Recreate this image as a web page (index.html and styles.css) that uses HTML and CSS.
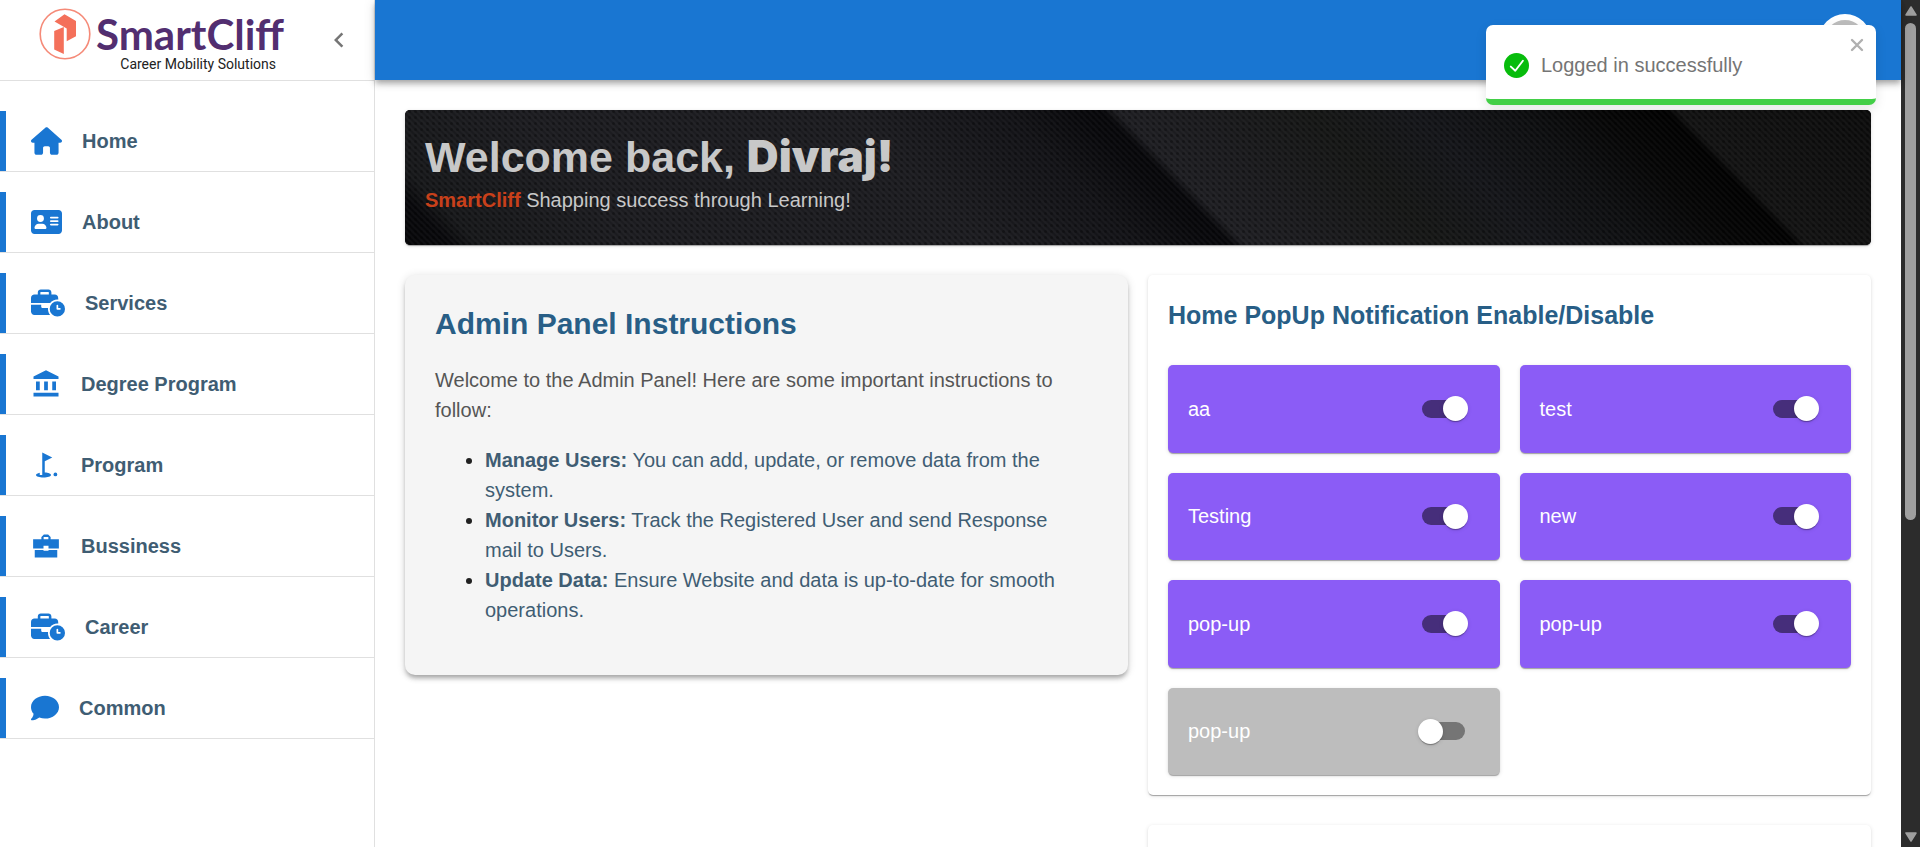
FILE: index.html
```html
<!DOCTYPE html>
<html lang="en">
<head>
<meta charset="utf-8">
<meta name="viewport" content="width=device-width, initial-scale=1">
<title>SmartCliff Admin</title>
<link rel="stylesheet" href="styles.css">
</head>
<body>
<div class="shell">
  <aside class="sidebar">
    <div class="sidebar-head">
      <a class="logo" href="#" aria-label="SmartCliff home">
        <svg class="logo-mark" viewBox="0 0 52 52" aria-hidden="true">
          <circle cx="26" cy="26" r="24.8" fill="#fff" stroke="#f58a78" stroke-width="1.6"/>
          <path d="M15.5 13.5 25.5 6.3 37 13v15.2L27.7 33.200V20.500z" fill="#f4705a"/>
          <path d="M15.200 23 24.800 19v27L15.200 41.500z" fill="#f4705a"/>
        </svg>
        <span class="logo-text">
          <span class="logo-name">SmartCliff</span>
          <span class="logo-tag">Career Mobility Solutions</span>
        </span>
      </a>
      <button class="collapse" type="button" aria-label="Collapse menu">
        <svg width="30" height="30" viewBox="0 0 24 24" aria-hidden="true"><path d="M15.410 7.410 14 6l-6 6 6 6 1.410-1.410L10.830 12z"/></svg>
      </button>
    </div>
    <nav class="nav">
      <a class="nav-item" href="#">
        <svg width="31" height="28" viewBox="0 0 576 512" aria-hidden="true"><path d="M575.8 255.500c0 18-15 32.100-32 32.100h-32l.7 160.200c0 2.700-.2 5.400-.5 8.100V472c0 22.100-17.900 40-40 40H456c-1.100 0-2.200 0-3.300-.1c-1.400 .1-2.800 .1-4.200 .1H416 392c-22.100 0-40-17.900-40-40V448 384c0-17.700-14.300-32-32-32H256c-17.700 0-32 14.300-32 32v64 24c0 22.100-17.900 40-40 40H160 128.100c-1.500 0-3-.1-4.500-.2c-1.200 .1-2.400 .2-3.600 .2H104c-22.100 0-40-17.900-40-40V360c0-.9 0-1.900 .1-2.800V287.600H32c-18 0-32-14-32-32.100c0-9 3-17 10-24L266.400 8c7-7 15-8 22-8s15 2 21 7L564.800 231.500c8 7 12 15 11 24z"/></svg>
        <span>Home</span>
      </a>
      <a class="nav-item" href="#">
        <svg width="31" height="28" viewBox="0 0 576 512" aria-hidden="true"><path d="M64 32C28.700 32 0 60.700 0 96V416c0 35.300 28.700 64 64 64H512c35.300 0 64-28.700 64-64V96c0-35.300-28.700-64-64-64H64zm80 256h64c44.200 0 80 35.800 80 80c0 8.800-7.200 16-16 16H80c-8.800 0-16-7.200-16-16c0-44.200 35.800-80 80-80zm-32-96a64 64 0 1 1 128 0 64 64 0 1 1 -128 0zm256-32H496c8.800 0 16 7.200 16 16s-7.200 16-16 16H368c-8.800 0-16-7.200-16-16s7.200-16 16-16zm0 64H496c8.800 0 16 7.200 16 16s-7.200 16-16 16H368c-8.800 0-16-7.200-16-16s7.200-16 16-16zm0 64H496c8.800 0 16 7.200 16 16s-7.200 16-16 16H368c-8.800 0-16-7.200-16-16s7.200-16 16-16z"/></svg>
        <span>About</span>
      </a>
      <a class="nav-item" href="#">
        <svg width="34" height="28" viewBox="0 0 640 512" aria-hidden="true"><path d="M184 48H328c4.400 0 8 3.600 8 8V96H176V56c0-4.400 3.600-8 8-8zm-56 8V96H64C28.700 96 0 124.700 0 160v96H192 352h8.200c32.300-39.100 81.100-64 135.800-64c5.400 0 10.700 .2 16 .7V160c0-35.300-28.700-64-64-64H384V56c0-30.900-25.100-56-56-56H184c-30.900 0-56 25.100-56 56zM320 352H224c-17.700 0-32-14.300-32-32V288H0V416c0 35.300 28.700 64 64 64H360.200C335.100 449.600 320 410.500 320 368c0-5.400 .2-10.700 .7-16l-.7 0zm320 16a144 144 0 1 0 -288 0 144 144 0 1 0 288 0zM496 288c8.800 0 16 7.200 16 16v48h32c8.800 0 16 7.200 16 16s-7.200 16-16 16H496c-8.800 0-16-7.200-16-16V304c0-8.800 7.200-16 16-16z"/></svg>
        <span>Services</span>
      </a>
      <a class="nav-item" href="#">
        <svg width="30" height="30" viewBox="0 0 24 24" aria-hidden="true"><path d="M4 10h3v7H4zM10.500 10h3v7h-3zM2 19h20v3H2zM17 10h3v7h-3zM12 1 2 6v2h20V6z"/></svg>
        <span>Degree Program</span>
      </a>
      <a class="nav-item" href="#">
        <svg width="30" height="30" viewBox="0 0 24 24" aria-hidden="true"><circle cx="19.500" cy="19.500" r="1.500"/><path d="M17 5.920 9 2v18H7v-1.730c-1.790.35-3 .99-3 1.730 0 1.100 2.690 2 6 2s6-.9 6-2c0-.99-2.160-1.810-5-1.970V8.980l6-3.060z"/></svg>
        <span>Program</span>
      </a>
      <a class="nav-item" href="#">
        <svg width="30" height="30" viewBox="0 0 24 24" aria-hidden="true"><path d="M8.300 6.500V4.800L10.300 2.800h3.400l2 2v1.700H22.300V14H14v-2.200h-4V14H1.700V6.500zM10.100 6.500h3.800V4.700h-3.800zM3 15.200h7v.6h4v-.6h7v6H3z"/></svg>
        <span>Bussiness</span>
      </a>
      <a class="nav-item" href="#">
        <svg width="34" height="28" viewBox="0 0 640 512" aria-hidden="true"><path d="M184 48H328c4.400 0 8 3.600 8 8V96H176V56c0-4.400 3.600-8 8-8zm-56 8V96H64C28.700 96 0 124.700 0 160v96H192 352h8.200c32.300-39.100 81.100-64 135.800-64c5.400 0 10.700 .2 16 .7V160c0-35.300-28.700-64-64-64H384V56c0-30.900-25.100-56-56-56H184c-30.900 0-56 25.100-56 56zM320 352H224c-17.700 0-32-14.300-32-32V288H0V416c0 35.300 28.700 64 64 64H360.200C335.100 449.600 320 410.500 320 368c0-5.400 .2-10.700 .7-16l-.7 0zm320 16a144 144 0 1 0 -288 0 144 144 0 1 0 288 0zM496 288c8.800 0 16 7.200 16 16v48h32c8.800 0 16 7.200 16 16s-7.200 16-16 16H496c-8.800 0-16-7.200-16-16V304c0-8.800 7.200-16 16-16z"/></svg>
        <span>Career</span>
      </a>
      <a class="nav-item" href="#">
        <svg width="28" height="28" viewBox="0 0 512 512" aria-hidden="true"><path d="M512 240c0 114.900-114.600 208-256 208c-37.100 0-72.300-6.400-104.100-17.900c-11.900 8.700-31.300 20.600-54.300 30.600C73.600 471.100 44.700 480 16 480c-6.500 0-12.300-3.900-14.800-9.900c-2.500-6-1.100-12.800 3.400-17.400c2-2 4-4.500 6.200-7.100c4.100-5 9.600-12.400 15.200-21.600c10-16.600 19.500-38.400 21.400-62.900C17.700 326.800 0 285.100 0 240C0 125.100 114.600 32 256 32s256 93.100 256 208z"/></svg>
        <span>Common</span>
      </a>
    </nav>
  </aside>

  <div class="page">
    <header class="topbar">
      <button class="avatar" type="button" aria-label="Account">
        <svg width="24" height="24" viewBox="0 0 24 24" aria-hidden="true"><path d="M12 12c2.200 0 4-1.800 4-4s-1.800-4-4-4-4 1.800-4 4 1.800 4 4 4zm0 2c-2.700 0-8 1.300-8 4v2h16v-2c0-2.700-5.300-4-8-4z"/></svg>
      </button>
    </header>

    <main class="content">
      <section class="banner">
        <svg class="banner-art" viewBox="0 0 1466 135" preserveAspectRatio="xMidYMid slice" aria-hidden="true">
          <defs>
            <linearGradient id="folds" gradientUnits="userSpaceOnUse" x1="-200" y1="0" x2="1500" y2="0">
              <stop offset="0" stop-color="#050507"/>
              <stop offset=".068" stop-color="#08080b"/>
              <stop offset=".084" stop-color="#17181a"/>
              <stop offset=".18" stop-color="#1c1c20"/>
              <stop offset=".38" stop-color="#1c1c20"/>
              <stop offset=".47" stop-color="#131317"/>
              <stop offset=".515" stop-color="#08080b"/>
              <stop offset=".527" stop-color="#07070a"/>
              <stop offset=".536" stop-color="#1e1e22"/>
              <stop offset=".58" stop-color="#1b1b1e"/>
              <stop offset=".65" stop-color="#161716"/>
              <stop offset=".71" stop-color="#15161a"/>
              <stop offset=".77" stop-color="#0e0f11"/>
              <stop offset=".82" stop-color="#060606"/>
              <stop offset=".859" stop-color="#010101"/>
              <stop offset=".866" stop-color="#131313"/>
              <stop offset="1" stop-color="#0b0b0b"/>
            </linearGradient>
            <pattern id="weave" width="6" height="6" patternUnits="userSpaceOnUse">
              <path d="M-1-1 7 7M-1 5 1 7M5-1 7 1" stroke="#fff" stroke-opacity=".03" stroke-width="2"/>
              <circle cx="4.500" cy="1.500" r="1.500" fill="#000" fill-opacity=".28"/>
            </pattern>
          </defs>
          <rect x="-200" width="1700" height="135" fill="url(#folds)" transform="skewX(44)"/>
          <rect width="1466" height="135" fill="url(#weave)"/>
        </svg>
        <h1 class="banner-title">Welcome back, <span class="banner-name">Divraj!</span></h1>
        <p class="banner-sub"><strong class="brand">SmartCliff</strong> Shapping success through Learning!</p>
      </section>

      <div class="columns">
        <section class="instructions">
          <h2 class="instructions-title">Admin Panel Instructions</h2>
          <p class="instructions-intro">Welcome to the Admin Panel! Here are some important instructions to follow:</p>
          <ul class="instructions-list">
            <li><strong>Manage Users:</strong> You can add, update, or remove data from the system.</li>
            <li><strong>Monitor Users:</strong> Track the Registered User and send Response mail to Users.</li>
            <li><strong>Update Data:</strong> Ensure Website and data is up-to-date for smooth operations.</li>
          </ul>
        </section>

        <div class="stack">
          <section class="card">
            <h2 class="card-title">Home PopUp Notification Enable/Disable</h2>
            <div class="popups">
              <label class="popup">aa <input class="switch" type="checkbox" role="switch" checked></label>
              <label class="popup">test <input class="switch" type="checkbox" role="switch" checked></label>
              <label class="popup">Testing <input class="switch" type="checkbox" role="switch" checked></label>
              <label class="popup">new <input class="switch" type="checkbox" role="switch" checked></label>
              <label class="popup">pop-up <input class="switch" type="checkbox" role="switch" checked></label>
              <label class="popup">pop-up <input class="switch" type="checkbox" role="switch" checked></label>
              <label class="popup">pop-up <input class="switch" type="checkbox" role="switch"></label>
            </div>
          </section>
          <section class="card card-next"></section>
        </div>
      </div>
    </main>

    <div class="toast" role="status">
      <svg class="toast-icon" width="25" height="25" viewBox="0 0 25 25" aria-hidden="true"><circle cx="12.500" cy="12.500" r="12.500" fill="#07bc0c"/><path d="M6.800 13.600 11.300 17.700 18.900 7.700" fill="none" stroke="#fff" stroke-width="1.900" stroke-linecap="round" stroke-linejoin="round"/></svg>
      <span>Logged in successfully</span>
      <button class="toast-close" type="button" aria-label="Close">
        <svg width="14" height="14" viewBox="0 0 14 14" aria-hidden="true"><path d="m2 2 10 10M12 2 2 12" stroke="#b0b0b0" stroke-width="2.400" stroke-linecap="round"/></svg>
      </button>
    </div>
  </div>

  <div class="scrollbar" aria-hidden="true">
    <svg width="12" height="10" viewBox="0 0 12 10"><path d="M6 1 11 9H1z" stroke="#9f9f9f" stroke-width="1.500" stroke-linejoin="round"/></svg>
    <span class="scroll-track"><span class="scroll-thumb"></span></span>
    <svg width="12" height="10" viewBox="0 0 12 10"><path d="M6 9 1 1h10z" stroke="#9f9f9f" stroke-width="1.500" stroke-linejoin="round"/></svg>
  </div>
</div>
</body>
</html>
```
FILE: styles.css
```css
*,
*::before {
  box-sizing: border-box;
}

body {
  margin: 0;
  background: #fff;
  color: #212121;
  font: 20px/30px "Liberation Sans", Arial, sans-serif;
}

h1,
h2,
p,
ul {
  margin: 0;
}

button {
  padding: 0;
  border: 0;
  background: none;
  cursor: pointer;
}

.shell {
  display: grid;
  grid-template-columns: 375px minmax(0, 1fr) 19px;
  height: 100vh;
  overflow: hidden;
}

/* Sidebar */
.sidebar {
  border-right: 1px solid #e0e0e0;
}

.sidebar-head {
  display: flex;
  align-items: center;
  justify-content: space-between;
  height: 81px;
  padding: 0 20px 0 39px;
  border-bottom: 1px solid #e0e0e0;
}

.logo {
  display: flex;
  gap: 5px;
  padding-top: 8px;
  align-self: flex-start;
  text-decoration: none;
}

.logo-mark {
  width: 52px;
  height: 52px;
}

.logo-text {
  display: flex;
  flex-direction: column;
  padding-top: 6px;
}

.logo-name {
  color: #522e70;
  font: bold 42px/40px Lato, sans-serif;
}

.logo-tag {
  align-self: flex-end;
  padding-right: 8px;
  color: #222;
  font: 14px/20px Roboto, sans-serif;
}

.collapse {
  width: 30px;
  height: 30px;
  fill: #757575;
}

.nav {
  display: flex;
  flex-direction: column;
  gap: 20px;
  padding-top: 30px;
}

.nav-item {
  position: relative;
  display: flex;
  align-items: center;
  gap: 20px;
  height: 61px;
  padding-left: 31px;
  border-bottom: 1px solid #e0e0e0;
  color: #3f5d73;
  fill: #1976d2;
  font-weight: bold;
  text-decoration: none;
}

.nav-item::before {
  content: "";
  position: absolute;
  top: 0;
  bottom: 0;
  left: 0;
  width: 6px;
  background: #1976d2;
}

/* Page */
.page {
  position: relative;
  min-height: 0;
}

.topbar {
  position: relative;
  display: flex;
  align-items: center;
  justify-content: flex-end;
  height: 80px;
  padding-right: 30px;
  background: #1976d2;
  box-shadow: 0 3px 5px -1px rgba(0, 0, 0, .2), 0 5px 6px rgba(0, 0, 0, .14), 0 1px 12px rgba(0, 0, 0, .12);
}

.avatar {
  display: grid;
  place-items: center;
  width: 52px;
  height: 52px;
  border: 6px solid #fff;
  border-radius: 50%;
  background: #bdbdbd;
  fill: #fff;
}

.content {
  display: flex;
  flex-direction: column;
  gap: 30px;
  padding: 30px;
}

.banner {
  position: relative;
  padding: 20px 20px 30px;
  border-radius: 5px;
  overflow: hidden;
  background: #17171a;
  color: #c8c8c8;
  box-shadow: 0 2px 1px -1px rgba(0, 0, 0, .2), 0 1px 1px rgba(0, 0, 0, .14), 0 1px 4px rgba(0, 0, 0, .12);
}

.banner-art {
  position: absolute;
  inset: 0;
  width: 100%;
  height: 100%;
}

.banner-title,
.banner-sub {
  position: relative;
}

.banner-title {
  font-size: 43px;
  line-height: 54px;
}

.banner-name {
  font-family: Inter, "Liberation Sans", sans-serif;
  font-size: 44px;
  font-weight: 900;
  line-height: 1;
}

.banner-sub {
  padding-top: 1px;
}

.brand {
  color: #c8401a;
}

.columns {
  display: grid;
  grid-template-columns: repeat(2, minmax(0, 1fr));
  align-items: start;
  gap: 20px;
}

.instructions {
  padding: 29px 50px 50px 30px;
  border-radius: 10px;
  background: #f5f5f5;
  box-shadow: 0 4px 4px -2px rgba(0, 0, 0, .2), 0 4px 5px rgba(0, 0, 0, .14), 0 1px 10px rgba(0, 0, 0, .12);
}

.instructions-title {
  color: #285e86;
  font-size: 30px;
  line-height: 40px;
}

.instructions-intro {
  padding: 21px 0 20px;
  color: #555;
}

.instructions-list {
  padding-left: 50px;
  color: #3f5d73;
}

.instructions-list li::marker {
  color: #212121;
}

.stack {
  display: flex;
  flex-direction: column;
  gap: 30px;
}

.card {
  padding: 20px;
  border-radius: 5px;
  background: #fff;
  box-shadow: 0 2px 1px -1px rgba(0, 0, 0, .2), 0 1px 1px rgba(0, 0, 0, .14), 0 1px 4px rgba(0, 0, 0, .12);
}

.card-next {
  min-height: 200px;
}

.card-title {
  padding-bottom: 30px;
  color: #285e86;
  font-size: 25px;
  line-height: 40px;
}

.popups {
  display: grid;
  grid-template-columns: repeat(2, minmax(0, 1fr));
  grid-auto-rows: 1fr;
  gap: 20px;
  min-height: 410px;
}

.popup {
  display: flex;
  align-items: center;
  justify-content: space-between;
  padding: 20px;
  border-radius: 5px;
  background: #bdbdbd;
  color: #fff;
  box-shadow: 0 2px 1px -1px rgba(0, 0, 0, .2), 0 1px 1px rgba(0, 0, 0, .14), 0 1px 4px rgba(0, 0, 0, .12);
}

.popup:has(:checked) {
  background: #8b5cf6;
}

.switch {
  appearance: none;
  display: flex;
  align-items: center;
  width: 43px;
  height: 18px;
  margin: 0 15px;
  border-radius: 9px;
  background: #757575;
  cursor: pointer;
}

.switch::before {
  content: "";
  flex: none;
  width: 25px;
  height: 25px;
  margin-left: -4px;
  border-radius: 50%;
  background: #fff;
  box-shadow: 0 2px 1px -1px rgba(0, 0, 0, .2), 0 1px 1px rgba(0, 0, 0, .14), 0 1px 4px rgba(0, 0, 0, .12);
}

.switch:checked {
  background: #462e7b;
}

.switch:checked::before {
  margin-left: 21px;
}

/* Toast */
.toast {
  position: absolute;
  top: 25px;
  right: 25px;
  display: flex;
  align-items: center;
  gap: 12px;
  width: 390px;
  height: 80px;
  padding: 0 18px;
  border-bottom: 6px solid #43cf47;
  border-radius: 7px;
  background: #fff;
  color: #757575;
  box-shadow: 0 4px 12px rgba(0, 0, 0, .1);
}

.toast-icon {
  margin-top: 6px;
}

.toast > span {
  padding-top: 6px;
}

.toast-close {
  display: grid;
  align-self: flex-start;
  margin: 13px -6px 0 auto;
}

/* Scrollbar */
.scrollbar {
  display: flex;
  flex-direction: column;
  align-items: center;
  gap: 7px;
  padding: 6px 0 5px;
  background: #2c2c2c;
  fill: #9f9f9f;
}

.scroll-track {
  flex: 1;
}

.scroll-thumb {
  display: block;
  width: 11px;
  height: 62%;
  border-radius: 6px;
  background: #9f9f9f;
}
```
